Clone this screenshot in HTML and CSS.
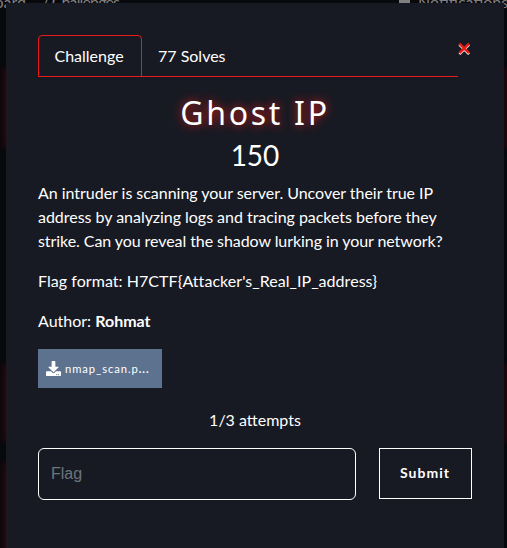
FILE: index.html
```html
<!DOCTYPE html>
<html lang="en">
<head>
<meta charset="utf-8">
<title>Ghost IP</title>
<link rel="stylesheet" href="styles.css">
</head>
<body>
<div class="backdrop">
  <span class="nav nav-left">board</span>
  <span class="nav nav-challenges">/ Challenges</span>
  <span class="nav-icon"></span>
  <span class="nav nav-notifications">Notifications</span>
  <i class="glow glow-a"></i><i class="glow glow-b"></i><i class="glow glow-c"></i>
  <i class="glow glow-d"></i><i class="glow glow-e"></i>
</div>
<main class="modal">
  <button class="close" aria-label="Close">
    <svg width="14" height="14" viewBox="0 0 14 14"><path class="x-shadow" d="M2.4 2.6l9.6 9.6M12 2.6l-9.6 9.6"/><path class="x-front" d="M2.4 1.6l9.6 9.6M12 1.6l-9.6 9.6"/></svg>
  </button>
  <nav class="tabs">
    <a class="tab active">Challenge</a>
    <a class="tab">77 Solves</a>
  </nav>
  <h2 class="title">Ghost IP</h2>
  <h3 class="value">150</h3>
  <p class="description">An intruder is scanning your server. Uncover their true IP address by analyzing logs and tracing packets before they <span class="tight">strike. Can you reveal the shadow lurking in your network?</span></p>
  <p class="format">Flag format: H7CTF{Attacker's_Real_IP_address}</p>
  <p>Author: <strong>Rohmat</strong></p>
  <a class="file">
    <svg width="15" height="15" viewBox="0 0 512 512"><path fill="currentColor" d="M216 0h80c13 0 24 11 24 24v168h88c18 0 27 22 14 34L270 378c-8 8-20 8-28 0L90 226c-13-12-4-34 14-34h88V24c0-13 11-24 24-24zm296 376v112c0 13-11 24-24 24H24c-13 0-24-11-24-24V376c0-13 11-24 24-24h147l49 49c20 20 52 20 72 0l49-49h147c13 0 24 11 24 24zM388 464a20 20 0 1 0-40 0 20 20 0 0 0 40 0zm64 0a20 20 0 1 0-40 0 20 20 0 0 0 40 0z"/></svg>
    <span>nmap_scan.p<b>...</b></span>
  </a>
  <div class="attempts">1/3 attempts</div>
  <form class="answer">
    <input type="text" placeholder="Flag">
    <button type="button" class="submit">Submit</button>
  </form>
</main>
</body>
</html>
```
FILE: styles.css
```css
* { box-sizing: border-box; }
body {
  margin: 0;
  height: 548px;
  overflow: hidden;
  background: #08090d;
  color: #fff;
  font: 16px/24px Lato, sans-serif;
}
.backdrop { position: absolute; inset: 0; overflow: hidden; }
.nav { position: absolute; top: -10px; color: #808080; white-space: nowrap; }
.nav-left { right: 481px; }
.nav-challenges { left: 42px; letter-spacing: -0.85px; }
.nav-notifications { left: 418px; }
.nav-icon { position: absolute; left: 399px; top: 0; width: 11px; height: 3px; background: #808080; }
.glow { position: absolute; width: 20px; background: #2a070b; box-shadow: 0 0 5px 2px #2a070b; }
.glow-a { left: 5px; top: 70px; height: 76px; }
.glow-b { left: 5px; top: 366px; height: 74px; }
.glow-c { left: 5px; top: 464px; height: 90px; }
.glow-d { left: 507px; top: 70px; height: 76px; }
.glow-e { left: 507px; top: 366px; height: 74px; }
.modal {
  position: relative;
  width: 498px;
  height: 545px;
  margin: 3px 0 0 6px;
  padding: 32px 32px 0;
  background: #181a23;
}
.close {
  position: absolute;
  left: 451px;
  top: 39px;
  width: 14px;
  height: 14px;
  padding: 0;
  border: 0;
  background: none;
}
.close svg { display: block; }
.x-shadow, .x-front { fill: none; stroke-width: 2.6; }
.x-shadow { stroke: #fff; }
.x-front { stroke: #e81c16; }
.tabs {
  display: flex;
  width: 420px;
  height: 42px;
  border-bottom: 1px solid #e81c16;
}
.tab { height: 42px; padding: 8px 15px; border: 1px solid transparent; }
.tab.active {
  width: 104px;
  padding-left: 15.5px;
  padding-right: 0;
  border-color: #e81c16;
  border-radius: 4px 4px 0 0;
}
.title {
  margin: 16px 0 0;
  height: 40px;
  font: 400 32px/40px "Noto Sans", sans-serif;
  letter-spacing: 2.7px;
  text-align: center;
  text-shadow: 0 0 10px #e81c16;
}
.value { margin: 5px 0 9px; font-weight: 400; font-size: 28px; line-height: 34px; text-align: center; }
p { margin: 0 0 16px; }
.description { letter-spacing: -0.03px; }
.tight { letter-spacing: -0.07px; }
.format { letter-spacing: 0.05px; }
.file {
  display: flex;
  align-items: center;
  gap: 4px;
  width: 124px;
  height: 39px;
  padding-left: 8px;
  background: #5c728f;
  font-size: 11.2px;
  letter-spacing: 0.95px;
}
.attempts { margin-top: 20px; text-align: center; }
.answer { display: flex; justify-content: space-between; margin-top: 16px; }
input {
  width: 318px;
  height: 52px;
  padding: 0 12px;
  border: 1px solid #fff;
  border-radius: 6px;
  background: transparent;
  color: #fff;
  font: 16px "Liberation Sans", sans-serif;
}
input::placeholder { color: #6c757d; opacity: 1; }
.submit {
  width: 93px;
  height: 51px;
  padding: 0 1px 2px 0;
  border: 1px solid #fff;
  background: transparent;
  color: #fff;
  font: 700 14px Lato, sans-serif;
  letter-spacing: 1px;
}
```
